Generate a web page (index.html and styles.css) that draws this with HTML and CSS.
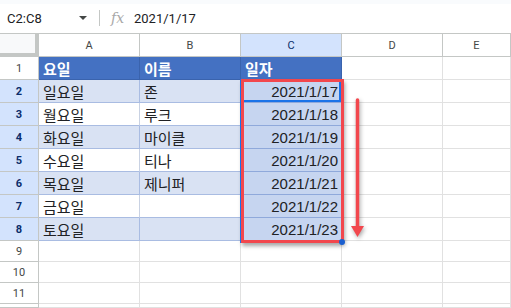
FILE: index.html
```html
<!DOCTYPE html>
<html lang="ko">
<head>
  <meta charset="UTF-8">
  <title>Sheet</title>
  <link rel="stylesheet" href="styles.css">
</head>
<body>
<div class="topStrip"></div>
<div class="formulaBar">
  <div class="nameBox"><span class="range">C2:C8</span><span class="caret"></span></div>
  <div class="sep"></div>
  <span class="fx">fx</span>
  <span class="formula">2021/1/17</span>
</div>

<div class="sheet">
  <div class="grid">
    <div class="corner"></div>
    <div class="colhead">A</div>
    <div class="colhead">B</div>
    <div class="colhead sel">C</div>
    <div class="colhead">D</div>
    <div class="colhead">E</div>

    <div class="rowhead">1</div>
    <div class="cell top">요일</div>
    <div class="cell top">이름</div>
    <div class="cell top">일자</div>
    <div class="cell"></div>
    <div class="cell"></div>

    <div class="rowhead sel">2</div>
    <div class="cell band">일요일</div>
    <div class="cell band">존</div>
    <div class="cell date active">2021/1/17</div>
    <div class="cell"></div>
    <div class="cell"></div>

    <div class="rowhead sel">3</div>
    <div class="cell plain">월요일</div>
    <div class="cell plain">루크</div>
    <div class="cell date">2021/1/18</div>
    <div class="cell"></div>
    <div class="cell"></div>

    <div class="rowhead sel">4</div>
    <div class="cell band">화요일</div>
    <div class="cell band">마이클</div>
    <div class="cell date">2021/1/19</div>
    <div class="cell"></div>
    <div class="cell"></div>

    <div class="rowhead sel">5</div>
    <div class="cell plain">수요일</div>
    <div class="cell plain">티나</div>
    <div class="cell date">2021/1/20</div>
    <div class="cell"></div>
    <div class="cell"></div>

    <div class="rowhead sel">6</div>
    <div class="cell band">목요일</div>
    <div class="cell band">제니퍼</div>
    <div class="cell date">2021/1/21</div>
    <div class="cell"></div>
    <div class="cell"></div>

    <div class="rowhead sel">7</div>
    <div class="cell plain">금요일</div>
    <div class="cell plain"></div>
    <div class="cell date">2021/1/22</div>
    <div class="cell"></div>
    <div class="cell"></div>

    <div class="rowhead sel">8</div>
    <div class="cell band">토요일</div>
    <div class="cell band"></div>
    <div class="cell date">2021/1/23</div>
    <div class="cell"></div>
    <div class="cell"></div>

    <div class="rowhead">9</div>
    <div class="cell"></div>
    <div class="cell"></div>
    <div class="cell"></div>
    <div class="cell"></div>
    <div class="cell"></div>

    <div class="rowhead">10</div>
    <div class="cell"></div>
    <div class="cell"></div>
    <div class="cell"></div>
    <div class="cell"></div>
    <div class="cell"></div>

    <div class="rowhead">11</div>
    <div class="cell"></div>
    <div class="cell"></div>
    <div class="cell"></div>
    <div class="cell"></div>
    <div class="cell"></div>

    <div class="rowhead"></div>
    <div class="cell"></div>
    <div class="cell"></div>
    <div class="cell"></div>
    <div class="cell"></div>
    <div class="cell"></div>
  </div>

  <!-- callout over the selected range -->
  <div class="highlight"></div>
  <div class="handle"></div>
  <svg class="arrow" width="20" height="150" viewBox="0 0 20 150">
    <line x1="9.5" y1="6" x2="9.5" y2="134" stroke="#f2474d" stroke-width="3.5" stroke-linecap="round"/>
    <polygon points="3,132 16,132 9.5,143" fill="#f2474d"/>
  </svg>
</div>
</body>
</html>
```

FILE: styles.css
```css
html {
  --line: #e1e1e1;
  --head-line: #c4c7c5;
  --head-sel: #d3e3fd;
  --blue: #4471c2;
  --band: #d9e2f3;
  --band-line: #a9bce2;
  --sel: #c6d5f0;
  --red: #f2474d;
  --text: #202124;
}

body {
  margin: 0;
  width: 511px;
  height: 308px;
  overflow: hidden;
  background: #fff;
  font-family: 'Liberation Sans', 'Noto Sans CJK KR', sans-serif;
  color: var(--text);
}

.topStrip {
  height: 4px;
  background: #f9fbfd;
}

.formulaBar {
  box-sizing: border-box;
  height: 30px;
  border-bottom: 1px solid var(--head-line);
  display: flex;
  align-items: center;
  font-family: Roboto, 'Liberation Sans', sans-serif;
  font-size: 13px;
  padding-bottom: 1px;
}

.nameBox {
  width: 99px;
  display: flex;
  align-items: center;
  padding-left: 7px;
  box-sizing: border-box;
}

.range {
  width: 72px;
}

.caret {
  width: 0;
  height: 0;
  border-left: 4px solid transparent;
  border-right: 4px solid transparent;
  border-top: 4px solid #444746;
}

.sep {
  width: 1px;
  height: 16px;
  background: var(--head-line);
}

.fx {
  margin-left: 11px;
  width: 23px;
  font-family: 'DejaVu Serif', serif;
  font-style: italic;
  font-size: 14px;
  color: #a8a8a8;
}

.formula {
  color: var(--text);
}

.sheet {
  position: relative;
}

.grid {
  display: grid;
  grid-template-columns: 39px repeat(4, 101px) 68px;
  grid-template-rows: 23px repeat(8, 23px) repeat(3, 21px) 4px;
}

.grid > div {
  box-sizing: border-box;
  display: flex;
  align-items: center;
  overflow: hidden;
}

.corner {
  background: #f8f9fa;
  border-right: 4px solid var(--head-line);
  border-bottom: 4px solid var(--head-line);
}

.colhead {
  justify-content: center;
  font-family: Roboto, 'Liberation Sans', sans-serif;
  font-size: 11px;
  color: #444746;
  border-right: 1px solid var(--head-line);
  border-bottom: 1px solid var(--head-line);
}

.rowhead {
  justify-content: center;
  font-family: Roboto, 'Liberation Sans', sans-serif;
  font-size: 11px;
  color: #444746;
  border-right: 1px solid var(--head-line);
  border-bottom: 1px solid var(--head-line);
}

.colhead.sel,
.rowhead.sel {
  background: var(--head-sel);
  color: #0b2d6b;
}

.rowhead.sel {
  font-weight: bold;
}

.cell {
  font-size: 15px;
  padding-left: 4px;
  border-right: 1px solid var(--line);
  border-bottom: 1px solid var(--line);
}

.cell.top {
  background: var(--blue);
  color: #fff;
  font-weight: bold;
  border-color: #3a63ad;
}

.cell.band {
  background: var(--band);
  border-color: var(--band-line);
}

.cell.plain {
  background: #fff;
  border-right-color: #c9d2e3;
  border-bottom-color: var(--band-line);
}

.cell.date {
  background: var(--sel);
  border-color: #8fa9db;
  justify-content: flex-end;
  padding-right: 3px;
}

.cell.active {
  box-shadow: inset -2px -2px 0 #1a73e8;
}

.highlight {
  position: absolute;
  left: 241px;
  top: 45px;
  width: 103px;
  height: 164px;
  box-sizing: border-box;
  border: 3px solid var(--red);
  box-shadow: -1px 0 0 #1a73e8, 1px 3px 4px rgba(0, 0, 0, 0.35);
}

.handle {
  position: absolute;
  left: 339px;
  top: 205px;
  width: 6px;
  height: 6px;
  border-radius: 50%;
  background: #1a5fd0;
}

.arrow {
  position: absolute;
  left: 348px;
  top: 60px;
  filter: drop-shadow(1px 2px 2px rgba(0, 0, 0, 0.35));
}
```
